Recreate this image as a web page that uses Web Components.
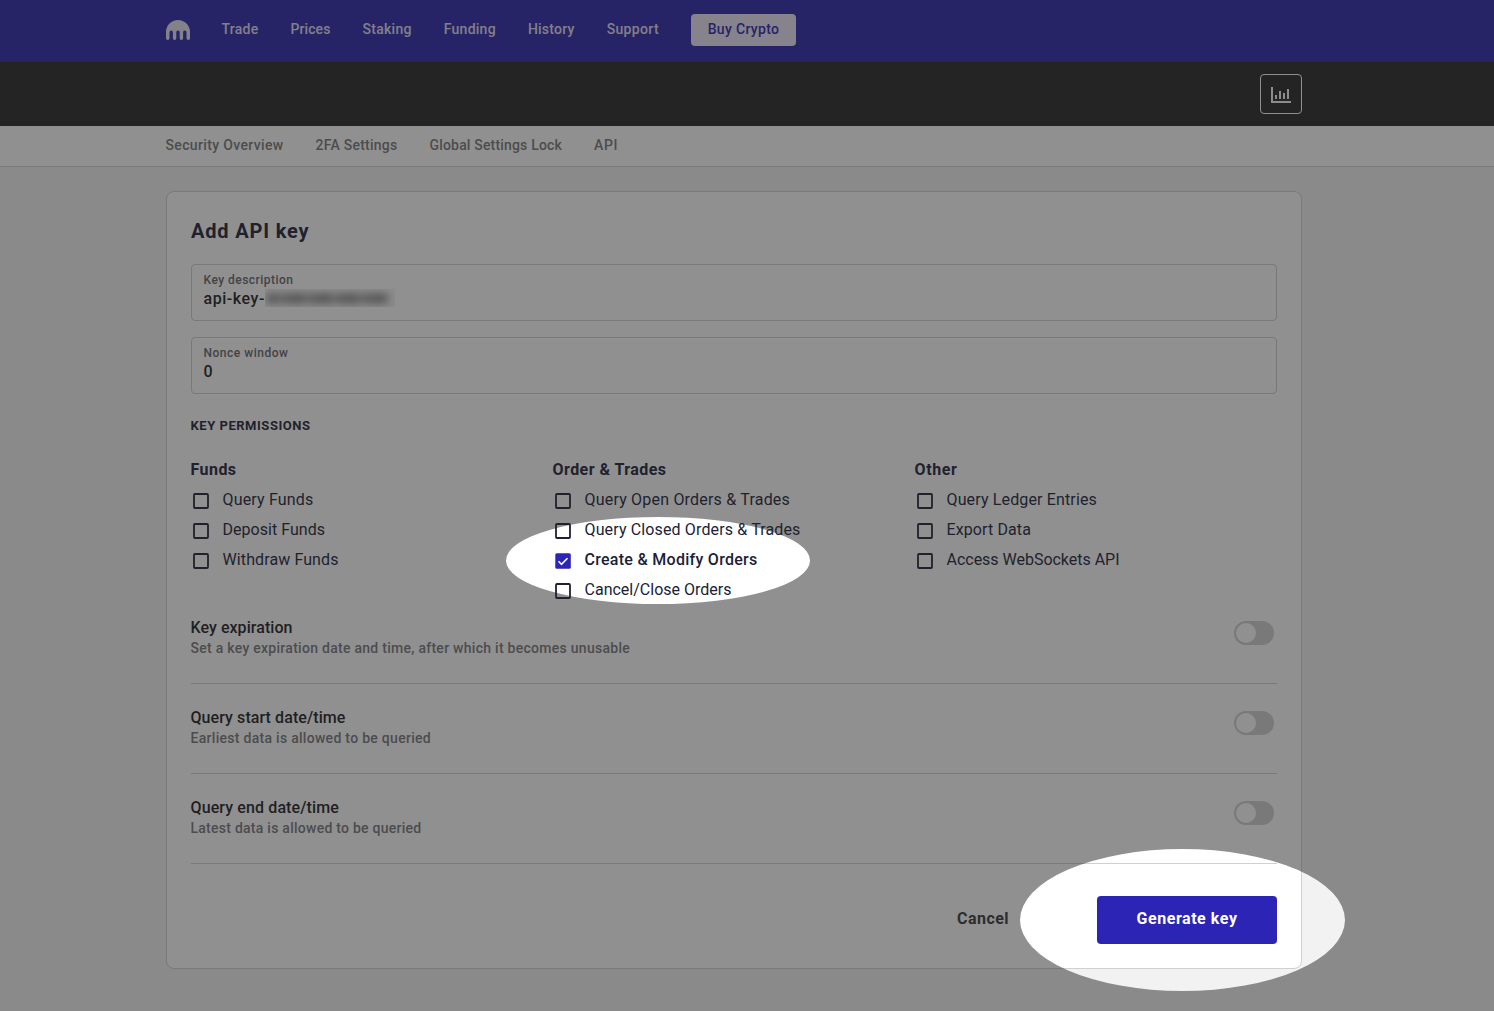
<!DOCTYPE html>
<html lang="en"><head><meta charset="utf-8"><title>Add API key</title>
<style>
html,body{margin:0;height:100%}
body{font-family:Roboto,"Liberation Sans",sans-serif;background:#f2f2f2;color:#201e38;overflow:hidden}
</style></head><body>
<api-page></api-page>
<script>
const shadow=(el,html)=>{el.attachShadow({mode:'open'}).innerHTML=html;};

// Single-line label whose tracking is adjusted to fill the width in its "w" attribute.
customElements.define('fit-label',class extends HTMLElement{
  connectedCallback(){
    const w=+this.getAttribute('w');
    shadow(this,`<style>:host{display:inline-block;vertical-align:top;white-space:nowrap;flex:none;width:${w}px}span{display:inline-block;vertical-align:top}</style><span><slot></slot></span>`);
    const s=this.shadowRoot.querySelector('span');
    s.style.letterSpacing=((w-s.getBoundingClientRect().width)/this.textContent.length)+'px';
  }
});

customElements.define('kraken-logo',class extends HTMLElement{
  connectedCallback(){shadow(this,`<style>:host{display:block;width:24px;height:20px}svg{display:block}</style>
  <svg width="24" height="20" viewBox="0 0 24 20" fill="#e6e0f4"><path d="M0 12A12 12 0 0 1 24 12V18.200a1.750 1.750 0 0 1-3.500 0V12.300a1.700 1.700 0 0 0-3.400 0V18.200a1.700 1.700 0 0 1-3.400 0V12.300a1.700 1.700 0 0 0-3.400 0V18.200a1.700 1.700 0 0 1-3.400 0V12.300a1.700 1.700 0 0 0-3.400 0V18.200a1.750 1.750 0 0 1-3.500 0Z"/></svg>`);}
});

customElements.define('top-bar',class extends HTMLElement{
  connectedCallback(){
    const items=[['Trade',37],['Prices',40],['Staking',49.2],['Funding',52.2],['History',46.8],['Support',52.3]];
    shadow(this,`<style>
    :host{display:block;height:62px;background:#2a26ab;box-sizing:border-box;padding:14px 0 0 166px}
    nav{display:flex;gap:32px;height:32px;align-items:flex-start;font-size:14px;line-height:30px;font-weight:500;color:#e2dcf0}
    kraken-logo{margin:6px -.5px 0 0}
    button{all:unset;box-sizing:border-box;width:105px;height:32px;background:#eae4f8;color:#2a26ab;border-radius:4px;display:flex;justify-content:center;align-items:flex-start;font-weight:500;line-height:30px}
    </style><nav><kraken-logo></kraken-logo>${items.map(([t,w])=>`<fit-label w="${w}">${t}</fit-label>`).join('')}<button><fit-label w="71.5">Buy Crypto</fit-label></button></nav>`);
  }
});

customElements.define('chart-bar',class extends HTMLElement{
  connectedCallback(){shadow(this,`<style>
    :host{display:flex;justify-content:flex-end;align-items:center;height:64px;background:#262626;box-sizing:border-box;padding:0 192px 0 166px}
    button{all:unset;box-sizing:border-box;width:42px;height:40px;border:1px solid #fff;border-radius:4px}svg{display:block}
    </style><button aria-label="Charts"><svg width="40" height="38" viewBox="0 0 40 38" fill="#f6f6f6"><path d="M10 12h2v14h18v2H10zM14 20h2v4h-2zM18 16h2v8h-2zM22 18h2v6h-2zM26 14h2v10h-2z"/></svg></button>`);}
});

customElements.define('sub-nav',class extends HTMLElement{
  connectedCallback(){
    const items=[['Security Overview',118],['2FA Settings',82],['Global Settings Lock',132.5],['API',24]];
    shadow(this,`<style>:host{display:flex;gap:32px;height:41px;box-sizing:border-box;padding-left:165.500px;background:#fff;border-bottom:1px solid #d0d0d0;font-size:14px;font-weight:500;line-height:38px;color:#77777a}</style>
    ${items.map(([t,w])=>`<fit-label w="${w}">${t}</fit-label>`).join('')}`);
  }
});

customElements.define('text-field',class extends HTMLElement{
  connectedCallback(){shadow(this,`<style>
    :host{display:block;box-sizing:border-box;height:57px;border:1px solid #d0d0d0;border-radius:4px;padding:6px 11.500px 0;color:#1c1c20}
    .l{font-size:12px;font-weight:500;line-height:18px;height:18px;color:#646468}
    .v{display:flex;font-size:16px;font-weight:500;line-height:19px;height:19px}
    </style><div class="l"><slot name="label"></slot></div><div class="v"><slot></slot></div>`);}
});

// Smudged strip that hides the generated part of the key name.
customElements.define('redacted-strip',class extends HTMLElement{
  connectedCallback(){shadow(this,`<style>:host{display:block;width:130px;height:18px;overflow:hidden;background:#f6f6f6}
    i{display:block;width:122px;height:9px;margin:5px 0 0 2px;background:repeating-linear-gradient(90deg,#777 0 9px,#a4a4a4 9px 16px,#888 16px 27px);filter:blur(4px)}</style><i></i>`);}
});

customElements.define('check-item',class extends HTMLElement{
  connectedCallback(){
    const on=this.hasAttribute('checked');
    shadow(this,`<style>:host{display:flex;height:30px;line-height:32px;font-size:16px;font-weight:${on?500:400}}
    svg{display:block;margin:9px 13.500px 0 2px;flex:none}</style>
    <svg width="16" height="16" viewBox="0 0 16 16" fill="none">${on?'<rect x=".3" y=".3" width="15.500" height="15.500" rx="1.500" fill="#2b24b5"/><path d="M3.500 8.300l3 3 6-6.100" stroke="#fff" stroke-width="1.600"/>':'<rect x="1" y="1" width="14" height="14" rx="1" stroke="#201e38" stroke-width="1.800"/>'}</svg><slot></slot>`);
  }
});

customElements.define('permission-group',class extends HTMLElement{
  connectedCallback(){shadow(this,`<style>:host{display:block;flex:1}.h{height:30px;line-height:32px;font-size:16px;font-weight:700}</style><div class="h"><slot name="title"></slot></div><slot></slot>`);}
});

customElements.define('toggle-switch',class extends HTMLElement{
  connectedCallback(){shadow(this,`<style>:host{display:block;box-sizing:border-box;width:40px;height:24px;border-radius:12px;background:#d0d0d0;padding:2px}i{display:block;width:20px;height:20px;border-radius:50%;background:#fff}</style><i></i>`);}
});

customElements.define('option-row',class extends HTMLElement{
  connectedCallback(){shadow(this,`<style>
    :host{display:flex;justify-content:space-between;box-sizing:border-box;height:calc(57px + var(--lead,33px));padding:calc(var(--lead,33px) - 10px) 3px 0 0;border-bottom:1px solid #d0d0d0}
    .t{font-size:16px;font-weight:500;line-height:21px;height:21px;color:#1c1c1e}
    .d{font-size:14px;font-weight:500;line-height:21px;height:21px;color:#77777a}
    toggle-switch{margin-top:4px}
    </style><div><div class="t"><slot name="title"></slot></div><div class="d"><slot></slot></div></div><toggle-switch></toggle-switch>`);}
});

customElements.define('key-form',class extends HTMLElement{
  connectedCallback(){
    const cols=[
      ['Funds',46,[['Query Funds',91],['Deposit Funds',102.5],['Withdraw Funds',116]]],
      ['Order &amp; Trades',114,[['Query Open Orders &amp; Trades',205.5],['Query Closed Orders &amp; Trades',216],['Create &amp; Modify Orders',173,1],['Cancel/Close Orders',147]]],
      ['Other',43,[['Query Ledger Entries',150.5],['Export Data',84.5],['Access WebSockets API',173]]]];
    const rows=[['Key expiration',102,'Set a key expiration date and time, after which it becomes unusable',439.5],['Query start date/time',155,'Earliest data is allowed to be queried',240.5],['Query end date/time',148.5,'Latest data is allowed to be queried',231]];
    shadow(this,`<style>
    :host{display:block;box-sizing:border-box;width:1136px;height:778px;margin:24px 0 0 166px;padding:24px;background:#fff;border:1px solid #d0d0d0;border-radius:8px}
    h1{margin:0;font-size:20px;line-height:30px;height:48px;font-weight:700}
    text-field+text-field{margin-top:16px}
    h2{margin:22px 0 0 -.5px;font-size:13px;line-height:20px;height:20px;font-weight:700}
    .cols{display:flex;margin-top:18px;height:150px}
    permission-group{flex:0 0 362px}
    permission-group>[slot],option-row>fit-label{margin-left:-.5px}
    option-row:first-of-type{--lead:23px}
    footer{display:flex;justify-content:flex-end;gap:88px;margin-top:32px;height:48px;line-height:45px;font-size:16px;font-weight:700;color:#38383c}
    button{all:unset;box-sizing:border-box;width:180px;height:48px;display:flex;justify-content:center;align-items:flex-start;line-height:45px;background:#2b24b5;color:#fff;border-radius:4px}
    </style>
    <h1><fit-label w="118.5">Add API key</fit-label></h1>
    <text-field><fit-label slot="label" w="90">Key description</fit-label><fit-label w="61.5">api-key-</fit-label><redacted-strip></redacted-strip></text-field>
    <text-field><fit-label slot="label" w="85">Nonce window</fit-label><fit-label w="9.5">0</fit-label></text-field>
    <h2><fit-label w="120">KEY PERMISSIONS</fit-label></h2>
    <div class="cols">${cols.map(([h,w,l])=>`<permission-group><fit-label slot="title" w="${w}">${h}</fit-label>${l.map(([t,n,c])=>`<check-item${c?' checked':''}><fit-label w="${n}">${t}</fit-label></check-item>`).join('')}</permission-group>`).join('')}</div>
    ${rows.map(([t,w,d,n])=>`<option-row><fit-label slot="title" w="${w}">${t}</fit-label><fit-label w="${n}">${d}</fit-label></option-row>`).join('')}
    <footer><fit-label w="52">Cancel</fit-label><button><fit-label w="101">Generate key</fit-label></button></footer>`);
  }
});

// Dimming layer with two elliptical openings.
customElements.define('spotlight-layer',class extends HTMLElement{
  connectedCallback(){shadow(this,`<style>:host{display:block;position:fixed;inset:0;pointer-events:none}svg{display:block}</style>
    <svg width="1494" height="1011" viewBox="0 0 1494 1011"><path fill="#222" fill-opacity=".5" fill-rule="evenodd" d="M0 0H1494V1011H0ZM506 560.500a152 43.500 0 1 0 304 0a152 43.500 0 1 0-304 0ZM1020 920a162.500 71 0 1 0 325 0a162.500 71 0 1 0-325 0Z"/></svg>`);}
});

customElements.define('api-page',class extends HTMLElement{
  connectedCallback(){shadow(this,`<style>:host{display:block;height:1011px}</style><top-bar></top-bar><chart-bar></chart-bar><sub-nav></sub-nav><key-form></key-form><spotlight-layer></spotlight-layer>`);}
});
</script></body></html>
